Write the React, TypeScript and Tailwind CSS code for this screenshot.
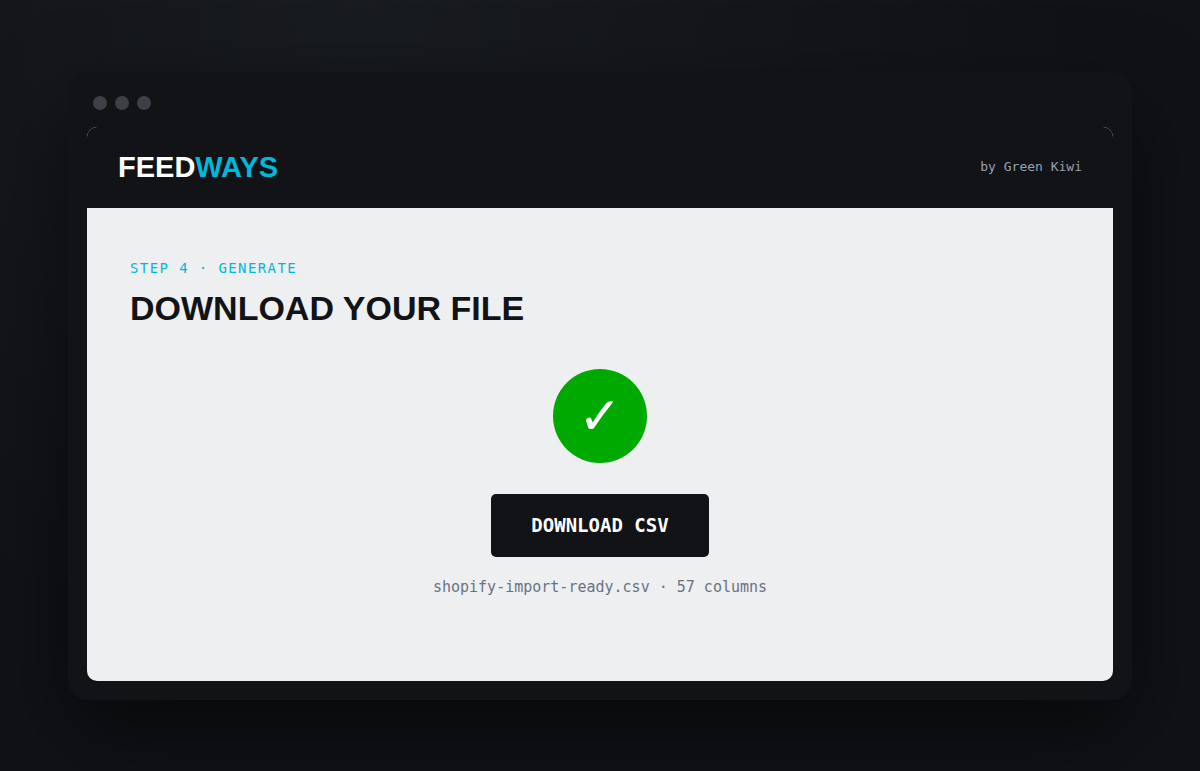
import type { ReactNode, } from "react";

interface BrowserFrameProps {
  children: ReactNode;
}

function BrowserFrame({ children, }: BrowserFrameProps,) {
  return (
    <div className="w-full rounded-[20px] bg-[#121317] px-[19px] pb-[19px] pt-6 shadow-[0_34px_86px_rgba(0,0,0,0.5)]">
      <div className="flex gap-2 pb-[17px] pl-[6px]">
        <span className="size-[14px] rounded-full bg-[#3e3f47]" />
        <span className="size-[14px] rounded-full bg-[#3e3f47]" />
        <span className="size-[14px] rounded-full bg-[#3e3f47]" />
      </div>
      <div className="overflow-hidden rounded-[10px] bg-[#eeeff1]">{children}</div>
    </div>
  );
}

function AppHeader() {
  return (
    <header className="flex items-center justify-between bg-[#121317] px-[31px] py-5">
      <a href="#" className="text-[29px] font-bold leading-[41px] text-white">
        FEED<span className="text-[#00b8db]">WAYS</span>
      </a>
      <span className="font-['DejaVu_Sans_Mono',monospace] text-[13px] text-[#99a1af]">
        by Green Kiwi
      </span>
    </header>
  );
}

function DownloadStep() {
  return (
    <main className="px-[43px] pb-[82px] pt-12">
      <p className="font-['DejaVu_Sans_Mono',monospace] text-sm leading-6 tracking-widest text-[#00b8db]">
        STEP 4 · GENERATE
      </p>
      <h1 className="mt-2 text-[34px] font-bold leading-[41px] text-[#121317]">
        DOWNLOAD YOUR FILE
      </h1>
      <div className="mt-10 flex flex-col items-center">
        <div className="flex size-[94px] items-center justify-center rounded-full bg-[#00a900] font-['DejaVu_Sans',sans-serif] text-[52px] leading-none text-white">
          ✓
        </div>
        <button
          type="button"
          className="mt-[31px] rounded-[5px] bg-[#121317] px-10 py-5 font-['DejaVu_Sans_Mono',monospace] text-[19px] font-bold leading-[23px] text-white"
        >
          DOWNLOAD CSV
        </button>
        <p className="mt-[18px] text-center font-['DejaVu_Sans_Mono',monospace] text-[15px] leading-6 text-[#6a7282]">
          shopify-import-ready.csv · 57 columns
        </p>
      </div>
    </main>
  );
}

export default function App() {
  return (
    <div className="flex min-h-screen items-center bg-[#111216] bg-[radial-gradient(ellipse_at_30%_0%,#181b1f_0%,#111216_60%)] px-[68px] py-10 font-['Liberation_Sans',Arial,sans-serif]">
      <BrowserFrame>
        <AppHeader />
        <DownloadStep />
      </BrowserFrame>
    </div>
  );
}
